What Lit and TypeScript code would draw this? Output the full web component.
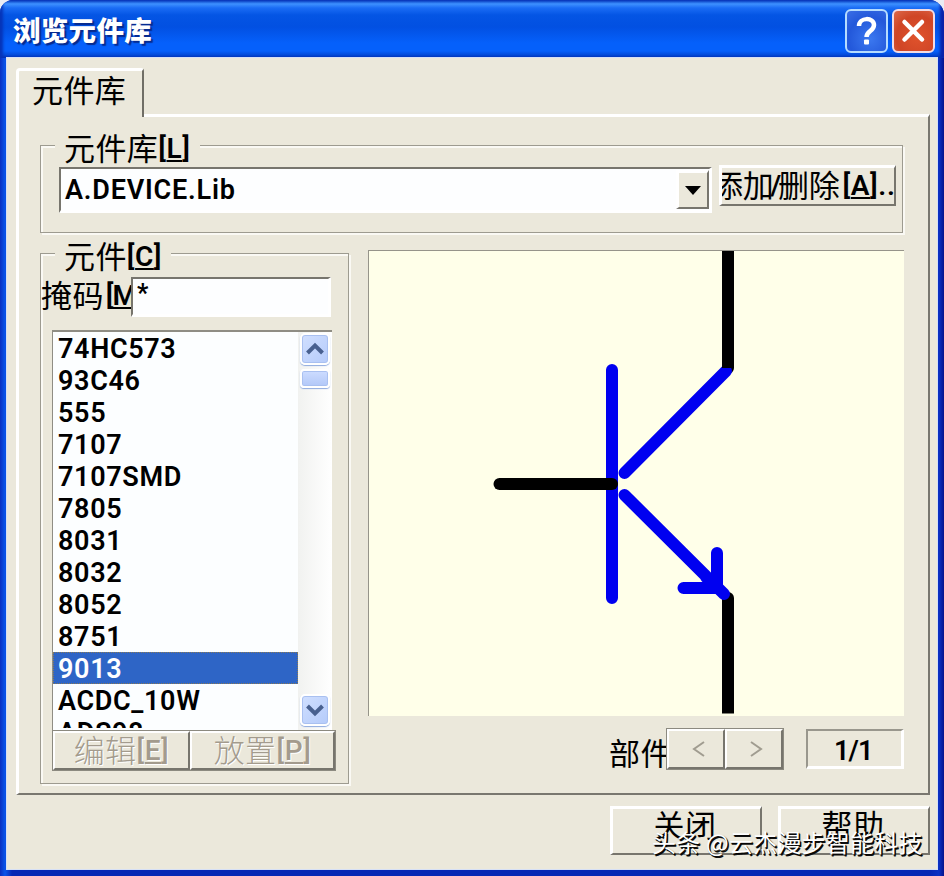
import { LitElement, html, css } from "lit";
import { customElement, property, state } from "lit/decorators.js";
import { classMap } from "lit/directives/class-map.js";

const COMPONENTS = [
  "74HC573", "93C46", "555", "7107", "7107SMD", "7805", "8031",
  "8032", "8052", "8751", "9013", "ACDC_10W", "ADS98",
];

@customElement("part-preview")
class PartPreview extends LitElement {
  static styles = css`
    :host { display: block; }
    .canvas { display: block; width: 100%; height: 100%; }
    .pin { stroke: #000; }
    .body { stroke: #0000f0; }
    .line { stroke-width: 12; stroke-linecap: round; stroke-linejoin: round; fill: none; }
    .butt { stroke-linecap: butt; }
  `;
  render() {
    return html`
      <svg class="canvas" viewBox="369 251 535 465" preserveAspectRatio="none">
        <path class="line pin" d="M728 252V368M728 598V706" />
        <path class="line body" d="M612 370V598M624.500 473L726 371M624.500 495L724 594M683.500 588H717V553M706 577L717 588" />
        <path class="line pin" d="M499.500 484H612" />
        <path class="line pin butt" d="M728 251V368M728 600V713.500" />
      </svg>
    `;
  }
}

@customElement("app-root")
class AppRoot extends LitElement {
  @property({ attribute: false }) items = COMPONENTS;
  @state() private selected = "9013";

  static styles = css`
    :host { display: block; width: 944px; height: 876px; background: #e9ecf4; overflow: hidden;
      font-family: Roboto, "Noto Sans CJK SC", sans-serif; color: #000; position: relative; }
    * { box-sizing: border-box; }
    .window { width: 944px; height: 876px; border-radius: 13px 15px 0 0; overflow: hidden;
      background: linear-gradient(90deg, #0a2fc0 0, #0a55ea 5px, #0626b4 12px, #0626b4 930px, #0a30c4 939px, #04128c 944px); display: flex; flex-direction: column; }
    .title { flex: none; height: 58px; display: flex; align-items: flex-start; padding: 9px 9px 0 13px;
      box-shadow: inset 3px 0 3px #0634b8, inset -4px 0 3px #0a22a8;
      background: linear-gradient(#0a45c8 0, #3d90ff 4px, #1a6cf5 8px, #0455e4 15px, #0250e2 27px, #0560fb 43px, #0560fb 51px, #0344d0 56px, #0239b8 58px); }
    .caption { flex: 1; font: 900 27.500px/40px "Noto Sans CJK SC", sans-serif; color: #fff;
      text-shadow: 2px 2px 1px #062a8e; letter-spacing: .3px; }
    .sys { width: 43px; height: 44px; border-radius: 6px; border: 2px solid #b5dcff; margin-left: 3px; display: block; }
    .sys.help { background: radial-gradient(circle at 60% 70%, #3b78f0, #2358da 60%, #3a6ee6); }
    .sys.close { background: radial-gradient(circle at 60% 65%, #e0532c, #cf4526 60%, #dc6a4b); border-color: #f3dce4; margin-left: 4px; }
    .client { flex: 1; margin: -1px 6px 6px 6px; background: #ebe8db; padding: 10px 8px 0 9px;
      border: 1px solid #d6e0f6; }
    .tab { width: 128px; height: 49px; border: solid #fff; border-width: 3px 0 0 3px; border-radius: 4px 3px 0 0;
      border-right: 2px solid #706e66; padding: 3px 0 0 13px; position: relative; background: #ebe8db; line-height: 44px; }
    .cjk { font: 400 31px/30px "Noto Sans CJK SC", sans-serif; letter-spacing: .4px; }
    .lat { font: 600 28px/30px Roboto, sans-serif; letter-spacing: .6px; }
    .lat u { text-decoration-thickness: 2px; text-underline-offset: 2px; }
    .label { white-space: nowrap; height: 34px; display: flex; align-items: center; }
    .label .lat { padding-top: 3px; }
    .panel { height: 681px; width: 914px; margin-top: -3px; margin-bottom: 1px; border: 3px solid #fff; border-right: 2px solid #79776f;
      border-bottom: 2px solid #79776f; padding: 28px 21px 0 21px; }
    .group { border: 1px solid #9d9b90; box-shadow: 2px 2px 0 #faf9f4, inset 2px 2px 0 #faf9f4; }
    .legend { background: #ebe8db; width: max-content; padding: 0 9px 0 9px; margin: -16px 0 0 14px; }
    .library { width: 863px; height: 88px; }
    .row { display: flex; align-items: flex-start; }
    .combo { width: 653px; height: 46px; margin-left: 18px; border: 3px solid #fff; border-top: 2px solid #77756d; border-left: 2px solid #77756d;
      background: #fdfeff; display: flex; align-items: center; margin-top: 3px; }
    .value { flex: 1; padding: 1px 0 0 4px; font: 600 27px/40px Roboto, sans-serif; letter-spacing: .8px; }
    .raised { background: #ebe8db; border: 3px solid #fff; border-right: 2px solid #77756d; border-bottom: 2px solid #77756d; }
    .drop { width: 33px; height: 39px; display: flex; align-items: center; justify-content: center; }
    .add { width: 177px; height: 41px; margin: 1px 0 0 7px; overflow: hidden; display: flex; align-items: center; justify-content: center; white-space: nowrap; }
    .add .cjk { letter-spacing: -.2px; margin-top: -4px; }
    .add .lat { margin-top: -3px; }
    .add .slash { margin-left: -3px; margin-right: -4px; }
    .add .lat:last-child { margin-left: 3px; }
    .main { display: flex; margin-top: 16px; }
    .parts { width: 309px; height: 531px; margin-top: 4px; padding: 0; }
    .mask { display: flex; align-items: flex-start; margin-top: 5px; height: 38px; }
    .masklabel { width: 90px; overflow: hidden; }
    .masklabel .lat { margin-left: 2px; letter-spacing: -1px; }
    .field { width: 200px; height: 40px; border: 3px solid #fff; border-top: 2px solid #77756d; border-left: 2px solid #77756d; background: #fdfeff;
      font: 700 25px/30px Roboto, sans-serif; padding: 0 0 0 4px; }
    .list { width: 280px; height: 400px; margin: 15px 0 0 11px; border: solid #8f8d84; border-width: 2px 0 0 1px; background: #fcfeff; display: flex; }
    .items { width: 245px; height: 396px; overflow: hidden; }
    .item { height: 32px; padding-left: 5px; font: 600 27px/34px Roboto, sans-serif; letter-spacing: .65px; white-space: nowrap; }
    .item.on { background: #2e65c6; color: #fff; outline: 1px dotted #8a7a55; outline-offset: -1px; }
    .scroll { flex: 1; display: flex; flex-direction: column; background: linear-gradient(90deg, #f1f2f0, #fff); padding: 1px 1px 4px 2px; }
    .arrow { width: 30px; height: 32px; border: 2px solid #fff; border-radius: 5px; background: linear-gradient(135deg, #d0dfff, #b5cbfa);
      box-shadow: 0 1px 1px #8eaade, inset 0 0 0 1px #a9c0f0; display: flex; align-items: center; justify-content: center; }
    .thumb { width: 30px; height: 19px; margin-top: 4px; border: 2px solid #fff; border-radius: 4px; background: linear-gradient(#cddcff, #b2c8f8);
      box-shadow: 0 1px 1px #8eaade, inset 0 0 0 1px #a9c0f0; }
    .gap { flex: 1; }
    .actions { display: flex; width: 284px; height: 41px; margin: 0 0 0 11px; border: 1px solid #8c8a80; }
    .act { height: 39px; flex: 1; display: flex; justify-content: center; align-items: center; color: #a39b8d; text-shadow: 1px 1px 0 #fff; border-width: 2px; white-space: nowrap; }
    .act .cjk { font-weight: 300; margin-top: -3px; }
    .act .lat { font-weight: 500; }
    .act.edit { flex: none; width: 137px; }
    .right { width: 536px; margin-left: 19px; }
    .preview { width: 536px; height: 466px; background: #ffffe9; border: solid #96948a; border-width: 1px 0 0 1px; margin-top: 1px; }
    .nav { display: flex; margin: 12px 0 0 241px; align-items: flex-start; }
    .partlabel { width: 57px; overflow: hidden; white-space: nowrap; height: 40px; padding-top: 9px; }
    .pager { width: 119px; height: 42px; display: flex; border: 1px solid #8c8a80; }
    .step { flex: 1; display: flex; align-items: center; justify-content: center; border-width: 2px; }
    .count { width: 99px; height: 40px; margin: 1px 0 0 22px; border: 2px solid #99978d; border-right: 3px solid #fff; border-bottom: 3px solid #fff;
      text-align: center; font: 600 27px/40px Roboto, sans-serif; padding-right: 2px; letter-spacing: -.8px; }
    .footer { display: flex; justify-content: flex-end; gap: 16px; margin-top: 11px; width: 914px; }
    .btn { width: 152px; height: 49px; text-align: center; line-height: 38px; padding-right: 3px; }
    .watermark { position: absolute; left: 652px; top: 824px; font: 400 24px/36px "Noto Sans CJK SC", sans-serif; color: #fff; white-space: nowrap;
      text-shadow: 1px 1px 1px #000, 1.500px 1.500px 0 #111; letter-spacing: .22px; }
  `;

  private lat(letter: string, tail = "") {
    return html`<span class="lat">[<u>${letter}</u>]${tail}</span>`;
  }

  render() {
    return html`
      <div class="window">
        <div class="title">
          <div class="caption">浏览元件库</div>
          <svg class="sys help" viewBox="0 0 39 40"><path d="M12 15C12 6 27 6 27 14C27 20 19.500 20 19.500 26" fill="none" stroke="#fff" stroke-width="4.500" /><rect x="17" y="28.500" width="5" height="5" rx="1" fill="#fff" /></svg>
          <svg class="sys close" viewBox="0 0 39 40"><path d="M10.500 11L28 28.500M28 11L10.500 28.500" stroke="#fff" stroke-width="4.500" stroke-linecap="round" /></svg>
        </div>
        <div class="client">
          <div class="tab"><span class="cjk">元件库</span></div>
          <div class="panel">
            <div class="group library">
              <div class="legend label"><span class="cjk">元件库</span>${this.lat("L")}</div>
              <div class="row">
                <div class="combo">
                  <span class="value">A.DEVICE.Lib</span>
                  <div class="raised drop"><svg width="16" height="9"><path d="M0 0H16L8 9Z" /></svg></div>
                </div>
                <div class="raised add label"><span class="cjk">添加</span><span class="lat slash">/</span><span class="cjk">删除</span>${this.lat("A", "...")}</div>
              </div>
            </div>
            <div class="main">
              <div class="group parts">
                <div class="legend label"><span class="cjk">元件</span>${this.lat("C")}</div>
                <div class="mask">
                  <div class="masklabel label"><span class="cjk">掩码</span>${this.lat("M")}</div>
                  <div class="field">*</div>
                </div>
                <div class="list">
                  <div class="items">
                    ${this.items.map((name) => html`<div class=${classMap({ item: true, on: name === this.selected })} @click=${() => (this.selected = name)}>${name}</div>`)}
                  </div>
                  <div class="scroll">
                    <div class="arrow"><svg width="20" height="14"><path d="M2.500 11L10 3.500L17.500 11" fill="none" stroke="#48608f" stroke-width="4" /></svg></div>
                    <div class="thumb"></div>
                    <div class="gap"></div>
                    <div class="arrow"><svg width="20" height="14"><path d="M2.500 3L10 10.500L17.500 3" fill="none" stroke="#48608f" stroke-width="4" /></svg></div>
                  </div>
                </div>
                <div class="actions">
                  <div class="raised act edit"><span class="cjk">编辑</span>${this.lat("E")}</div>
                  <div class="raised act"><span class="cjk">放置</span>${this.lat("P")}</div>
                </div>
              </div>
              <div class="right">
                <part-preview class="preview"></part-preview>
                <div class="nav">
                  <div class="partlabel cjk">部件</div>
                  <div class="pager">
                    <div class="raised step"><svg width="24" height="20"><path d="M20 3L10 10L20 17" fill="none" stroke="#a09c90" stroke-width="2" /></svg></div>
                    <div class="raised step"><svg width="24" height="20"><path d="M9 3L19 10L9 17" fill="none" stroke="#a09c90" stroke-width="2" /></svg></div>
                  </div>
                  <div class="count">1/1</div>
                </div>
              </div>
            </div>
          </div>
          <div class="footer">
            <div class="raised btn"><span class="cjk">关闭</span></div>
            <div class="raised btn"><span class="cjk">帮助</span></div>
          </div>
        </div>
      </div>
      <div class="watermark">头条 @云杰漫步智能科技</div>
    `;
  }
}
